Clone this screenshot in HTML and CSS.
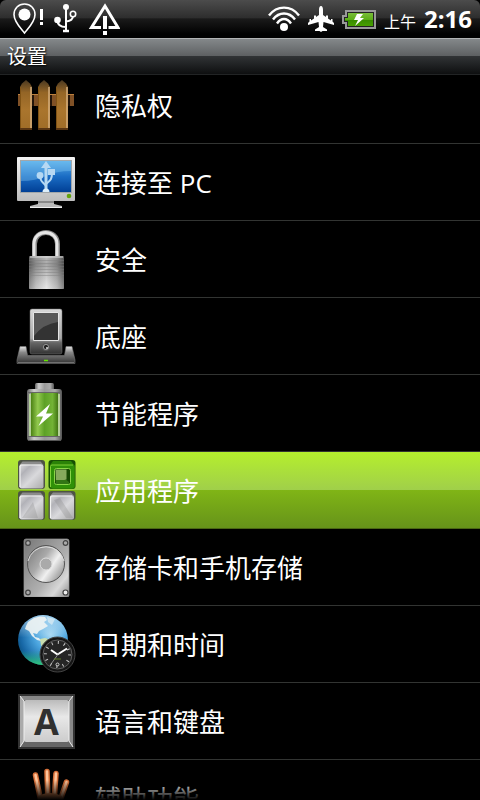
FILE: index.html
```html
<!DOCTYPE html>
<html lang="zh-CN">
<head>
<meta charset="utf-8">
<meta name="viewport" content="width=device-width, initial-scale=1">
<title>设置</title>
<link rel="stylesheet" href="styles.css">
</head>
<body>
<div class="screen">
  <div class="status">
    <div class="status-group notices">
      <svg width="32" height="32" viewBox="0 0 32 32" fill="none" stroke="#fff" aria-hidden="true">
        <path d="M12.500 30C9 25.500 2 19 2 11.500C2 5.500 6.500 1 12.500 1S23 5.500 23 11.500C23 19 16 25.500 12.500 30Z" stroke-width="1.600"/>
        <circle cx="12.500" cy="11.500" r="6" fill="#fff" stroke="none"/>
        <path d="M29.500 6V17M29.500 19V22" stroke-width="3"/>
      </svg>
      <svg width="24" height="32" viewBox="0 0 24 32" fill="none" stroke="#fff" stroke-width="2" aria-hidden="true">
        <path d="M12 4V28M3.500 17C3.500 22 7 24 12 24M19 13C19 17 16 18 12 18.500"/>
        <path d="M9 28H15" stroke-width="2.500"/>
        <circle cx="12" cy="4" r="3" fill="#fff" stroke="none"/>
        <circle cx="3.500" cy="17" r="3.300" fill="#fff" stroke="none"/>
        <circle cx="19" cy="11" r="2.700" stroke-width="1.600"/>
      </svg>
      <svg width="32" height="32" viewBox="0 0 32 32" fill="none" stroke="#fff" aria-hidden="true">
        <path d="M13 24.500H3.500L17 3L30 24.500H20.500" stroke-width="3"/>
        <path d="M17 13V26M17 28V32" stroke-width="4"/>
      </svg>
    </div>
    <div class="status-group system">
      <svg width="32" height="26" viewBox="0 0 32 26" fill="none" stroke="#fff" stroke-width="2.400" aria-hidden="true">
        <path d="M1 9.500C9 -1 23 -1 31 9.500M5 13.500C11 5.500 21 5.500 27 13.500M9 17.500C13 11.500 19 11.500 23 17.500"/>
        <circle cx="16" cy="21" r="4" fill="#fff" stroke="none"/>
      </svg>
      <svg width="26" height="26" viewBox="0 0 26 26" fill="#fff" aria-hidden="true">
        <path d="M13 0C14.500 0 15 2 15 4V9L18 11V9.500H20V12.500L23 14.500V13H24.500V15.500L26 17V19L15.500 16L15 21L19 23.500V25H14.500L13 26L11.500 25H7V23.500L11 21L10.500 16L0 19V17L1.500 15.500V13H3V14.500L6 12.500V9.500H8V11L11 9V4C11 2 11.500 0 13 0Z"/>
      </svg>
      <svg width="34" height="20" viewBox="0 0 34 20" aria-hidden="true">
        <defs><linearGradient id="cell" x2="0" y2="1"><stop stop-color="#79bd39"/><stop offset=".5" stop-color="#5cae17"/><stop offset=".55" stop-color="#398b00"/><stop offset="1" stop-color="#47a000"/></linearGradient></defs>
        <path d="M0 6H3V1H34V20H3V15H0Z" fill="#999"/>
        <path d="M2 8H5V3H32V18H5V13H2Z" fill="#222"/>
        <path d="M3 9H6V4H31V17H6V12H3Z" fill="url(#cell)"/>
        <path d="M15 5H21L18 9H22L13 17L16 11H12Z" fill="#fff"/>
      </svg>
      <span class="ampm">上午</span>
      <time class="clock">2:16</time>
    </div>
  </div>
  <header class="titlebar"><h1>设置</h1></header>
  <main class="list">
    <a class="row" href="#">
      <svg class="icon" viewBox="0 0 60 60" aria-hidden="true">
        <defs>
          <linearGradient id="wood" x2="0" y2="1"><stop stop-color="#4a3820"/><stop offset=".25" stop-color="#946526"/><stop offset=".6" stop-color="#aa752d"/><stop offset="1" stop-color="#a06d28"/></linearGradient>
          <g id="post"><path d="M0 12L2 8.500L6 5L10 8.500L12 12V55H0Z" fill="url(#wood)"/><path d="M11 12V53" stroke="#ddb98a" stroke-width="1.300"/><path d="M0 54H12" stroke="#593512" stroke-width="2"/><path d="M.5 12V53" stroke="#805315"/></g>
        </defs>
        <path d="M2 19H58V31H2Z" fill="#805126"/><path d="M2 19.500H58" stroke="#bc803e"/>
        <path d="M16 20H18V31H16ZM34 20H36V31H34ZM52 20H54V31H52Z" fill="#24150a"/>
        <use href="#post" x="4"/><use href="#post" x="22"/><use href="#post" x="40"/>
      </svg>
      <span class="label">隐私权</span>
    </a>
    <a class="row" href="#">
      <svg class="icon" viewBox="0 0 60 60" aria-hidden="true">
        <defs>
          <linearGradient id="blue" x2="0" y2="1"><stop stop-color="#58aee8"/><stop offset=".5" stop-color="#1a6cc4"/><stop offset="1" stop-color="#003e94"/></linearGradient>
          <linearGradient id="case" x2="0" y2="1"><stop stop-color="#f4f4f4"/><stop offset="1" stop-color="#bdbdbd"/></linearGradient>
        </defs>
        <path d="M22 48H38V52L46 54V56H14V54L22 52Z" fill="#bbb"/><path d="M22 49H38V51H22Z" fill="#888"/><path d="M14 55.500H46" stroke="#eee"/>
        <rect x="1" y="5" width="58" height="44" rx="1" fill="url(#case)"/>
        <rect x="4.500" y="8.500" width="51" height="32" fill="url(#blue)" stroke="#a2a7aa"/>
        <path d="M5 9H55V19Q40 19 30 24T5 29Z" fill="#8bd0fa" opacity=".35"/>
        <g fill="none" stroke="#b6d8f3" stroke-width="2"><path d="M30 14V40" stroke-width="3"/><path d="M24 24C24 30 28 31 30 34M36 21C36 29 33 29 30 32"/><path d="M30 9L25 16H35ZM32 17H39V23H32Z" fill="#b6d8f3" stroke="none"/><circle cx="24" cy="23.500" r="3.400" fill="#b6d8f3" stroke="none"/><path d="M26.500 40A3.500 3.500 0 0 1 33.500 40Z" fill="#dceefa" stroke="none"/></g>
        <circle cx="53" cy="44" r="2.300" fill="#63a30d"/>
      </svg>
      <span class="label">连接至 PC</span>
    </a>
    <a class="row" href="#">
      <svg class="icon" viewBox="0 0 60 60" aria-hidden="true">
        <defs>
          <linearGradient id="steel"><stop stop-color="#777"/><stop offset=".2" stop-color="#b5b5b5"/><stop offset=".5" stop-color="#e0e0e0"/><stop offset=".8" stop-color="#aaa"/><stop offset="1" stop-color="#666"/></linearGradient>
          <linearGradient id="shade" x2="0" y2="1"><stop stop-color="#000" stop-opacity=".15"/><stop offset=".25" stop-color="#000" stop-opacity=".25"/><stop offset="1" stop-color="#fff" stop-opacity=".2"/></linearGradient>
        </defs>
        <path d="M18.500 29V15C18.500 -.5 41.500 -.5 41.500 15V29" fill="none" stroke="#858585" stroke-width="5"/>
        <path d="M18 29V15C18 -.5 41 -.5 41 15V29" fill="none" stroke="#e6e6e6" stroke-width="3"/>
        <rect x="13" y="27" width="35" height="33" rx="1" fill="url(#steel)"/>
        <rect x="13" y="27" width="35" height="33" fill="url(#shade)"/>
        <path d="M13 31.500H48M13 34.500H48M13 37.500H48M13 40.500H48M13 43.500H48M13 46.500H48" stroke="#808080" opacity=".45"/>
        <path d="M14 28H47" stroke="#ddd"/>
      </svg>
      <span class="label">安全</span>
    </a>
    <a class="row" href="#">
      <svg class="icon" viewBox="0 0 60 60" aria-hidden="true">
        <defs>
          <linearGradient id="phone" x2="0" y2="1"><stop stop-color="#d8d8d8"/><stop offset=".65" stop-color="#aaa"/><stop offset=".75" stop-color="#666"/><stop offset="1" stop-color="#333"/></linearGradient>
          <linearGradient id="base" x2="0" y2="1"><stop stop-color="#e5e5e5"/><stop offset=".35" stop-color="#888"/><stop offset="1" stop-color="#303030"/></linearGradient>
        </defs>
        <path d="M4 40.500H10L11.500 49.500H48.500L50 40.500H56L59 54V57.500H1V54Z" fill="url(#base)" stroke="#777" stroke-width=".6"/>
        <rect x="14" y="3" width="32" height="45" rx="2" fill="url(#phone)" stroke="#777" stroke-width=".5"/>
        <path d="M17.500 6.500H42.500V34.500H17.500Z" fill="#333" stroke="#e5e5e5"/>
        <path d="M18 7H42V16Q27 18 18 30Z" fill="#585858"/>
        <circle cx="30" cy="41" r="4" fill="#555"/><circle cx="30" cy="41" r="2.600" fill="#222" stroke="#aaa" stroke-width=".8"/><circle cx="31" cy="42" r="1" fill="#ddd"/>
        <path d="M2 56.500H58" stroke="#888" stroke-width=".7"/><path d="M28 54.500H32" stroke="#65e500" stroke-width="1.500"/>
      </svg>
      <span class="label">底座</span>
    </a>
    <a class="row" href="#">
      <svg class="icon" viewBox="0 0 60 60" aria-hidden="true">
        <defs>
          <linearGradient id="juice"><stop stop-color="#4c8214"/><stop offset=".25" stop-color="#92c94e"/><stop offset=".5" stop-color="#5da126"/><stop offset=".8" stop-color="#72b336"/><stop offset="1" stop-color="#427614"/></linearGradient>
          <linearGradient id="rim"><stop stop-color="#666"/><stop offset=".2" stop-color="#ccc"/><stop offset=".5" stop-color="#999"/><stop offset=".8" stop-color="#aaa"/><stop offset="1" stop-color="#555"/></linearGradient>
        </defs>
        <rect x="19" y="0" width="19" height="8" rx="1.500" fill="url(#rim)"/>
        <rect x="11" y="6" width="35" height="52" rx="3" fill="url(#rim)"/>
        <rect x="13" y="11" width="31" height="42" fill="#b4d09a"/>
        <rect x="15" y="10" width="27" height="43" fill="url(#juice)"/>
        <path d="M12 9.500H45M12 53.500H45" stroke="#666"/><path d="M12 57.500H45" stroke="#555"/>
        <path d="M34 21L20 33.500H27L22.500 43L37 30.500H30Z" fill="#fff"/>
      </svg>
      <span class="label">节能程序</span>
    </a>
    <a class="row selected" href="#" aria-current="true">
      <svg class="icon" viewBox="0 0 60 60" aria-hidden="true">
        <defs>
          <linearGradient id="tile" x2="1" y2="1"><stop stop-color="#ddd"/><stop offset=".25" stop-color="#b2b2b8"/><stop offset=".55" stop-color="#d9d9dc"/><stop offset="1" stop-color="#aaa"/></linearGradient>
          <g id="key"><rect x="-.5" y="0" width="27" height="29" rx="3" fill="#4d5344"/><path d="M4 1.500H22L25 5H1Z" fill="#8b8b8b"/><rect x="1" y="4.500" width="24" height="24" rx="2" fill="url(#tile)"/><path d="M1.500 27V6.500Q1.500 5 3 5H23" fill="none" stroke="#f2f2f2" stroke-width="1.200"/></g>
        </defs>
        <use href="#key" x="2.500"/>
        <use href="#key" x="2.500" y="31"/><use href="#key" x="33" y="31"/>
        <path d="M17 42L6 58H22ZM38 40L44 38L57 58H50Z" fill="#888" opacity=".3"/>
        <rect x="32.500" y="0" width="27" height="29" rx="3" fill="#174f04"/>
        <path d="M37 1H55L58 5H34Z" fill="#2a8307"/>
        <rect x="34.500" y="4.500" width="24" height="24" rx="2" fill="#2f9108" stroke="#2f8005"/>
        <path d="M34.500 27V6.500Q34.500 5 36 5H57" fill="none" stroke="#7ed137"/>
        <rect x="38.500" y="8.500" width="16" height="16" rx="2" fill="#174a03" stroke="#8ad548"/>
        <path d="M39.500 9.500H50.500V19.500L40 22Z" fill="#86a95c"/><path d="M40 20H50.500L53 22V24H40Z" fill="#327515"/>
      </svg>
      <span class="label">应用程序</span>
    </a>
    <a class="row" href="#">
      <svg class="icon" viewBox="0 0 60 60" aria-hidden="true">
        <defs>
          <linearGradient id="plate" x2="1" y2="1"><stop stop-color="#777"/><stop offset=".6" stop-color="#b0b0b0"/><stop offset=".8" stop-color="#d8d8d8"/><stop offset="1" stop-color="#888"/></linearGradient>
          <linearGradient id="disc" x2="1" y2=".7"><stop stop-color="#777"/><stop offset=".45" stop-color="#aaa"/><stop offset=".7" stop-color="#f0f0f0"/><stop offset="1" stop-color="#999"/></linearGradient>
        </defs>
        <rect x="8" y="2" width="45" height="58" rx="2" fill="url(#plate)" stroke="#999" stroke-width=".7"/>
        <circle cx="30" cy="27" r="18.500" fill="url(#disc)" stroke="#555"/><path d="M12 24A18.500 18.500 0 0 1 48 24" fill="none" stroke="#ddd"/>
        <circle cx="30" cy="27" r="6" fill="#aaa" stroke="#ddd"/>
        <g fill="#aaa" stroke="#444" stroke-width="1.200"><circle cx="12" cy="6" r="2.300"/><circle cx="49.500" cy="6" r="2.300"/><circle cx="12" cy="55.500" r="2.300"/><circle cx="49.500" cy="55.500" r="2.500" fill="#eee"/></g>
      </svg>
      <span class="label">存储卡和手机存储</span>
    </a>
    <a class="row" href="#">
      <svg class="icon" viewBox="0 0 60 60" aria-hidden="true">
        <defs>
          <radialGradient id="sea" cx=".65" cy=".4" r=".7"><stop stop-color="#a5d7f2"/><stop offset=".45" stop-color="#4ba5df"/><stop offset=".85" stop-color="#1767a6"/><stop offset="1" stop-color="#0c5486"/></radialGradient>
          <linearGradient id="glow" x2="0" y2="1"><stop stop-color="#e8f7ff" stop-opacity=".6"/><stop offset=".45" stop-color="#fff" stop-opacity="0"/><stop offset=".7" stop-color="#2bb684" stop-opacity="0"/><stop offset="1" stop-color="#34d576" stop-opacity=".9"/></linearGradient>
        </defs>
        <circle cx="27" cy="26" r="25" fill="url(#sea)"/><circle cx="27" cy="26" r="25" fill="url(#glow)"/>
        <path d="M10 12L12 8L18 4L24 2.500L29 3L31 6L28 8L32 12L27 15L23 17L21 20L17 19L19 23L23 24L25 27L21 26L16 22L13 17L9 15Z" fill="#eef3f3" opacity=".92"/>
        <path d="M24 25L29 24L35 26L39 30L36 36L29 37L25 31Z" fill="#d8e4a4" opacity=".85"/>
        <path d="M31 3L39 5L36 11L32 8Z" fill="#e0eef3" opacity=".7"/>
        <circle cx="41.500" cy="40.500" r="17.500" fill="#151515" stroke="#444"/><circle cx="41.500" cy="40.500" r="14.500" fill="#252525" stroke="#5c5c5c"/>
        <circle cx="41.500" cy="40.500" r="12" fill="none" stroke="#ccc" stroke-width="3" stroke-dasharray="1 5.283"/>
        <path d="M41.500 40.500L51 34.500M41.500 40.500L35 36" stroke="#fff" stroke-width="2"/><path d="M43 39L35 50" stroke="#bbb" stroke-width=".7"/>
        <path d="M38 45H45" stroke="#5e7a22"/><circle cx="41.500" cy="50.500" r="1.500" fill="none" stroke="#ccc"/>
      </svg>
      <span class="label">日期和时间</span>
    </a>
    <a class="row" href="#">
      <svg class="icon" viewBox="0 0 60 60" aria-hidden="true">
        <defs><linearGradient id="cap" x2="0" y2="1"><stop stop-color="#bbb"/><stop offset=".4" stop-color="#e8e8e8"/><stop offset="1" stop-color="#ccc"/></linearGradient></defs>
        <rect x="2" y="3" width="57" height="55" fill="#333"/>
        <path d="M4 5H57L53 9H8Z" fill="#888"/><path d="M4 5L8 9V51L4 56Z" fill="#aaa"/><path d="M57 5L53 9V51L57 56Z" fill="#888"/><path d="M4 56L8 50H53L57 56Z" fill="#666"/>
        <rect x="8" y="9" width="45" height="42" rx="2" fill="url(#cap)"/>
        <path d="M4 5L8 10V50L4 56M57 5L53 10V50L57 56" fill="none" stroke="#eee"/>
        <text class="keycap" x="30.500" y="44" text-anchor="middle">A</text>
      </svg>
      <span class="label">语言和键盘</span>
    </a>
    <a class="row" href="#">
      <svg class="icon" viewBox="0 0 60 60" aria-hidden="true">
        <g fill="none" stroke-linecap="round">
          <path d="M19.500 7L25 34M31 3.500L32 34M40 5.500L38 34M50.500 14L43 36" stroke="#d9713a" stroke-width="5.500"/>
          <path d="M19.500 7L25 34M31 3.500L32 34M40 5.500L38 34M50.500 14L43 36" stroke="#ffc49a" stroke-width="2.500"/>
        </g>
        <path d="M22 28Q34 22 46 28L43 50L30 54L22 40Z" fill="#e08a55"/>
      </svg>
      <span class="label">辅助功能</span>
    </a>
  </main>
</div>
</body>
</html>
```
FILE: styles.css
```css
* {
  box-sizing: border-box;
}

body {
  margin: 0;
  background: #000;
  color: #fff;
  font-family: "Open Sans", "Noto Sans CJK SC", sans-serif;
}

.screen {
  display: flex;
  flex-direction: column;
  height: 100vh;
  overflow: hidden;
}

.status {
  display: flex;
  flex: none;
  justify-content: space-between;
  align-items: center;
  height: 38px;
  padding: 0 8px 0 12px;
  border-radius: 6px 6px 0 0;
  background: linear-gradient(#4c4c4c, #2e2e2e 46%, #1a1a1a 50%, #000 90%);
}

.status-group {
  display: flex;
  align-items: center;
}

.notices {
  gap: 10px;
}

.system {
  gap: 8px;
}

.ampm {
  font-size: 16px;
  line-height: 24px;
  padding-top: 6px;
}

.clock {
  font-size: 24px;
  line-height: 32px;
  font-weight: 700;
}

.titlebar {
  flex: none;
  height: 37px;
  padding: 0 7px;
  border-top: 1px solid #b0b3b4;
  border-bottom: 1px solid #222425;
  background: linear-gradient(#84888a, #5d6062 49%, #303335 50%, #0e0f10);
}

.titlebar h1 {
  margin: 0;
  font-size: 20px;
  line-height: 36px;
  font-weight: 400;
  text-shadow: 1px 1px 2px #000;
}

.list {
  position: relative;
  flex: 1;
  min-height: 0;
  overflow: hidden;
}

.list::after {
  content: "";
  position: absolute;
  inset: auto 0 0;
  height: 20px;
  background: linear-gradient(transparent, #000);
}

.row {
  display: flex;
  align-items: center;
  gap: 19px;
  height: 77px;
  padding: 0 16px;
  border-bottom: 1px solid #323432;
  color: #fff;
  font-size: 26px;
  line-height: 36px;
  text-decoration: none;
}

/* The list is scrolled part-way into its first visible entry. */
.row:first-child {
  margin-top: -8px;
}

.selected {
  background: linear-gradient(#b5ef2d, #a0cf4a 50%, #80b516 50%, #66931a);
  border-bottom-color: #4a6614;
}

.icon {
  flex: none;
  width: 60px;
  height: 60px;
}

.label {
  padding-top: 2px;
}

.keycap {
  fill: #303030;
  font-size: 36px;
  font-weight: 700;
}
```
